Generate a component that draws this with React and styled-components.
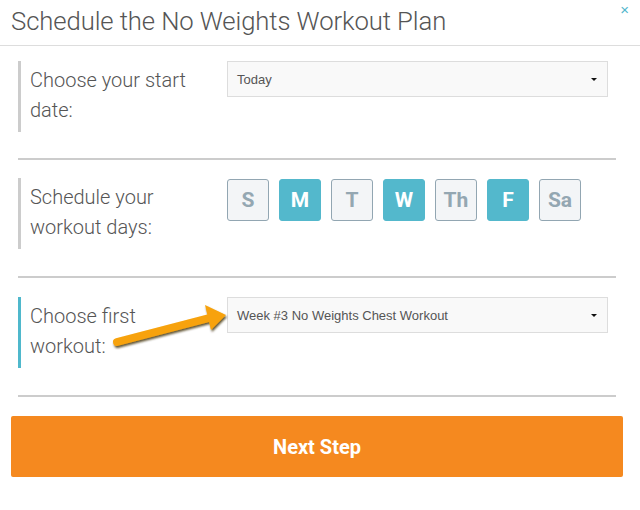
import React from "react";
import styled, { createGlobalStyle } from "styled-components";

const Global = createGlobalStyle`
  html, body { margin: 0; padding: 0; background: #fff; }
  body { font-family: "Liberation Sans", Arial, sans-serif; }
  * { box-sizing: border-box; }
`;

const Modal = styled.div`
  width: 640px;
  height: 510px;
  background: #fff;
  position: relative;
`;

const Header = styled.div`
  height: 46px;
  border-bottom: 1px solid #dddddd;
  padding: 6px 11px 0;
`;

const Title = styled.h1`
  margin: 0;
  font-family: Roboto, "Liberation Sans", sans-serif;
  font-weight: 300;
  font-size: 25.7px;
  line-height: 30px;
  color: #555;
  letter-spacing: -0.1px;
`;

const Close = styled.span`
  position: absolute;
  top: 1px;
  right: 11px;
  font-family: "Liberation Sans", Arial, sans-serif;
  font-size: 15px;
  color: #4fb6cc;
  cursor: pointer;
`;

const Body = styled.div`
  padding: 0 24px 0 18px;
`;

const Block = styled.div`
  padding: ${(p) => p.$top}px 0 ${(p) => p.$bottom}px;
  border-bottom: 2px solid #cccccc;
`;

const Row = styled.div`
  position: relative;
  display: flex;
  height: ${(p) => p.$h}px;
  border-left: 3px solid ${(p) => (p.$active ? "#4fb8cc" : "#cccccc")};
`;

const Label = styled.div`
  flex: 0 0 206px;
  padding: 4px 30px 0 9px;
  font-family: Roboto, "Liberation Sans", sans-serif;
  font-weight: 300;
  font-size: 20px;
  line-height: 30px;
  color: #555;
`;

const Select = styled.div`
  width: 381px;
  height: 36px;
  background: #f9f9f9;
  border: 1px solid #dddddd;
  display: flex;
  align-items: center;
  justify-content: space-between;
  padding: 0 10px 0 9px;
  font-family: "Liberation Sans", Arial, sans-serif;
  font-size: 13px;
  color: #555;
`;

const Caret = styled.span`
  width: 0;
  height: 0;
  border-left: 3px solid transparent;
  border-right: 3px solid transparent;
  border-top: 3px solid #111;
`;

const Days = styled.div`
  display: flex;
  gap: 10px;
  padding-top: 1px;
`;

const Day = styled.div`
  width: 42px;
  height: 42px;
  border-radius: 3px;
  border: 1px solid ${(p) => (p.$on ? "#53b8cc" : "#92a6b2")};
  background: ${(p) => (p.$on ? "#53b8cc" : "#f3f5f7")};
  color: ${(p) => (p.$on ? "#ffffff" : "#94a7b2")};
  display: flex;
  align-items: center;
  justify-content: center;
  font-family: Roboto, "Liberation Sans", sans-serif;
  font-weight: 700;
  font-size: 21px;
`;

const Arrow = styled.svg`
  position: absolute;
  left: 92px;
  top: 9px;
  overflow: visible;
`;

const Footer = styled.div`
  padding: 19px 17px 0 11px;
`;

const NextButton = styled.button`
  width: 100%;
  height: 61px;
  border: none;
  border-radius: 2px;
  background: #f5891f;
  color: #fff;
  font-family: Roboto, "Liberation Sans", sans-serif;
  font-weight: 700;
  font-size: 20px;
  cursor: pointer;
`;

const days = [
  ["S", false],
  ["M", true],
  ["T", false],
  ["W", true],
  ["Th", false],
  ["F", true],
  ["Sa", false],
];

export default function App() {
  return (
    <>
      <Global />
      <Modal>
        <Header>
          <Title>Schedule the No Weights Workout Plan</Title>
          <Close>×</Close>
        </Header>
        <Body>
          <Block $top={15} $bottom={26}>
            <Row $h={71}>
              <Label>Choose your start date:</Label>
              <Select>
                <span>Today</span>
                <Caret />
              </Select>
            </Row>
          </Block>
          <Block $top={18} $bottom={27}>
            <Row $h={71}>
              <Label>Schedule your workout days:</Label>
              <Days>
                {days.map(([d, on]) => (
                  <Day key={d} $on={on}>
                    {d}
                  </Day>
                ))}
              </Days>
            </Row>
          </Block>
          <Block $top={19} $bottom={27}>
            <Row $h={71} $active>
              <Label>Choose first workout:</Label>
              <Select>
                <span>Week #3 No Weights Chest Workout</span>
                <Caret />
              </Select>
              <Arrow width="120" height="45" viewBox="0 0 120 45">
                <defs>
                  <filter id="sh" x="-20%" y="-40%" width="140%" height="180%">
                    <feDropShadow dx="1" dy="2" stdDeviation="1" floodColor="#3a2a00" floodOpacity="0.8" />
                  </filter>
                </defs>
                <g filter="url(#sh)">
                  <line x1="4" y1="36" x2="100" y2="11" stroke="#f7a20a" strokeWidth="8" strokeLinecap="round" />
                  <polygon points="92,-1 113,9 98,24" fill="#f7a20a" />
                </g>
              </Arrow>
            </Row>
          </Block>
        </Body>
        <Footer>
          <NextButton>Next Step</NextButton>
        </Footer>
      </Modal>
    </>
  );
}
